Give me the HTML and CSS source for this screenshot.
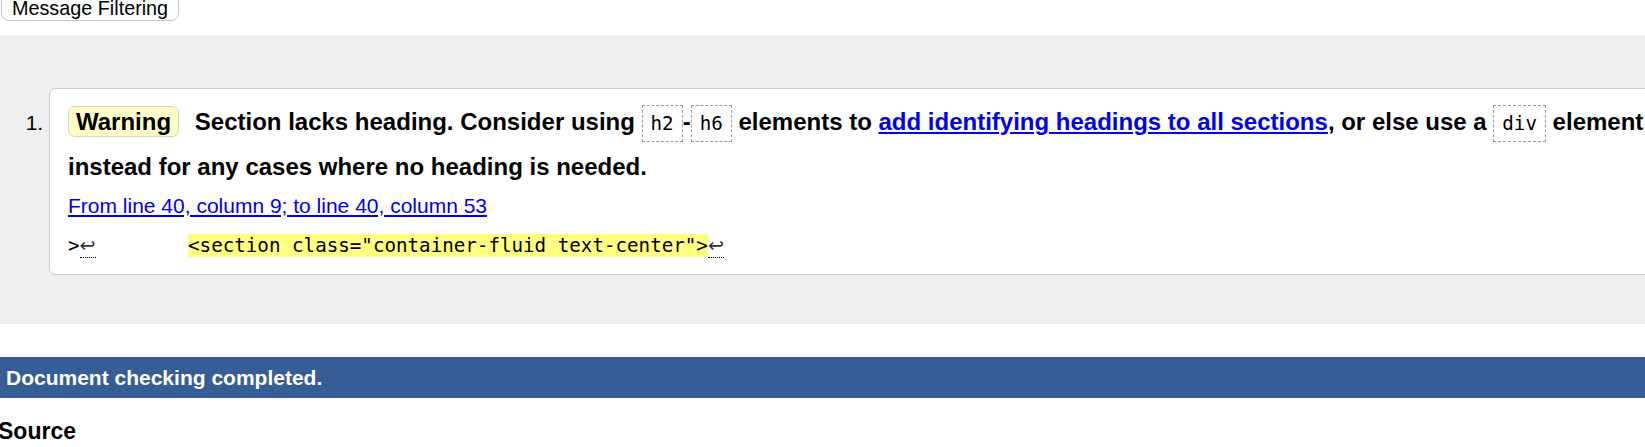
FILE: index.html
```html
<!DOCTYPE html>
<html lang="en">
<head>
<meta charset="utf-8">
<title>Nu Html Checker</title>
<link rel="stylesheet" href="styles.css">
</head>
<body>
<div class="page">
  <div class="filters"><button class="filter-btn" type="button">Message Filtering</button></div>
  <div class="results">
    <ol class="msgs">
      <li class="msg">
        <p class="msg-text"><strong class="badge">Warning</strong> <span>Section lacks heading. Consider using <code class="tag">h2</code>-<code class="tag">h6</code> elements to <a class="link" href="#">add identifying headings to all sections</a>, or else use a <code class="tag">div</code> element instead for any cases where no heading is needed.</span></p>
        <p class="location"><a class="link" href="#">From line 40, column 9; to line 40, column 53</a></p>
        <p class="extract"><code class="extract-code">&gt;<span class="lf">↩</span>        <b class="hl">&lt;section class="container-fluid text-center"&gt;</b><span class="lf">↩</span></code></p>
      </li>
    </ol>
  </div>
  <p class="success">Document checking completed.</p>
  <h2 class="source-title">Source</h2>
</div>
</body>
</html>
```
FILE: styles.css
```css
html {
  overflow: hidden;
}
body {
  margin: 0;
  font-family: "Liberation Sans", Arial, sans-serif;
  color: #000;
  background: #fff;
}
.page {
  width: 1720px;
  margin-top: -7px;
}
.filters {
  height: 28px;
  margin-bottom: 14px;
  padding-left: 1px;
}
.filter-btn {
  font-family: "Liberation Sans", Arial, sans-serif;
  font-size: 19.8px;
  line-height: 22px;
  height: 28px;
  padding: 3px 10px 1px;
  border: 1px solid #c4c4c4;
  border-radius: 8px;
  background: #fff;
  color: #000;
}
.results {
  background: #efefef;
  padding: 53px 0 49px;
}
.msgs {
  margin: 0;
  padding: 0 0 0 49px;
  font-size: 21px;
}
.msg {
  background: #fff;
  border: 1px solid #cccccc;
  border-radius: 6px;
  padding: 10px 18px 16px;
}
.msg-text {
  margin: 0;
  font-size: 24px;
  font-weight: bold;
  line-height: 45px;
}
.badge {
  background: #ffffc8;
  border: 1px solid #d8d8b8;
  border-radius: 7px;
  padding: 1px 7px;
  margin-right: 9px;
}
.tag {
  font-family: "DejaVu Sans Mono", monospace;
  font-size: 19.2px;
  font-weight: normal;
  line-height: 1;
  border: 1px dashed #9a9a9a;
  padding: 6px 8px;
  background: #fff;
}
.link {
  color: #0000ee;
}
.location {
  margin: 5px 0 0;
  font-size: 21px;
  line-height: 24px;
}
.extract {
  margin: 16px 0 0;
  font-family: "DejaVu Sans Mono", monospace;
  font-size: 19.2px;
  line-height: 24px;
}
.extract-code {
  font-family: "DejaVu Sans Mono", monospace;
  font-size: 19.2px;
  white-space: pre;
}
.hl {
  font-weight: normal;
  background: #ffff80;
}
.lf {
  font-family: "DejaVu Sans", sans-serif;
  color: #333;
  border-bottom: 1px dotted #000;
}
.success {
  margin: 33px 0 0;
  background: #365d95;
  color: #fff;
  font-weight: bold;
  font-size: 21px;
  line-height: 25px;
  padding: 8px 6px;
}
.source-title {
  margin: 20px 0 0 -2px;
  font-size: 23px;
  line-height: 26px;
}
```
